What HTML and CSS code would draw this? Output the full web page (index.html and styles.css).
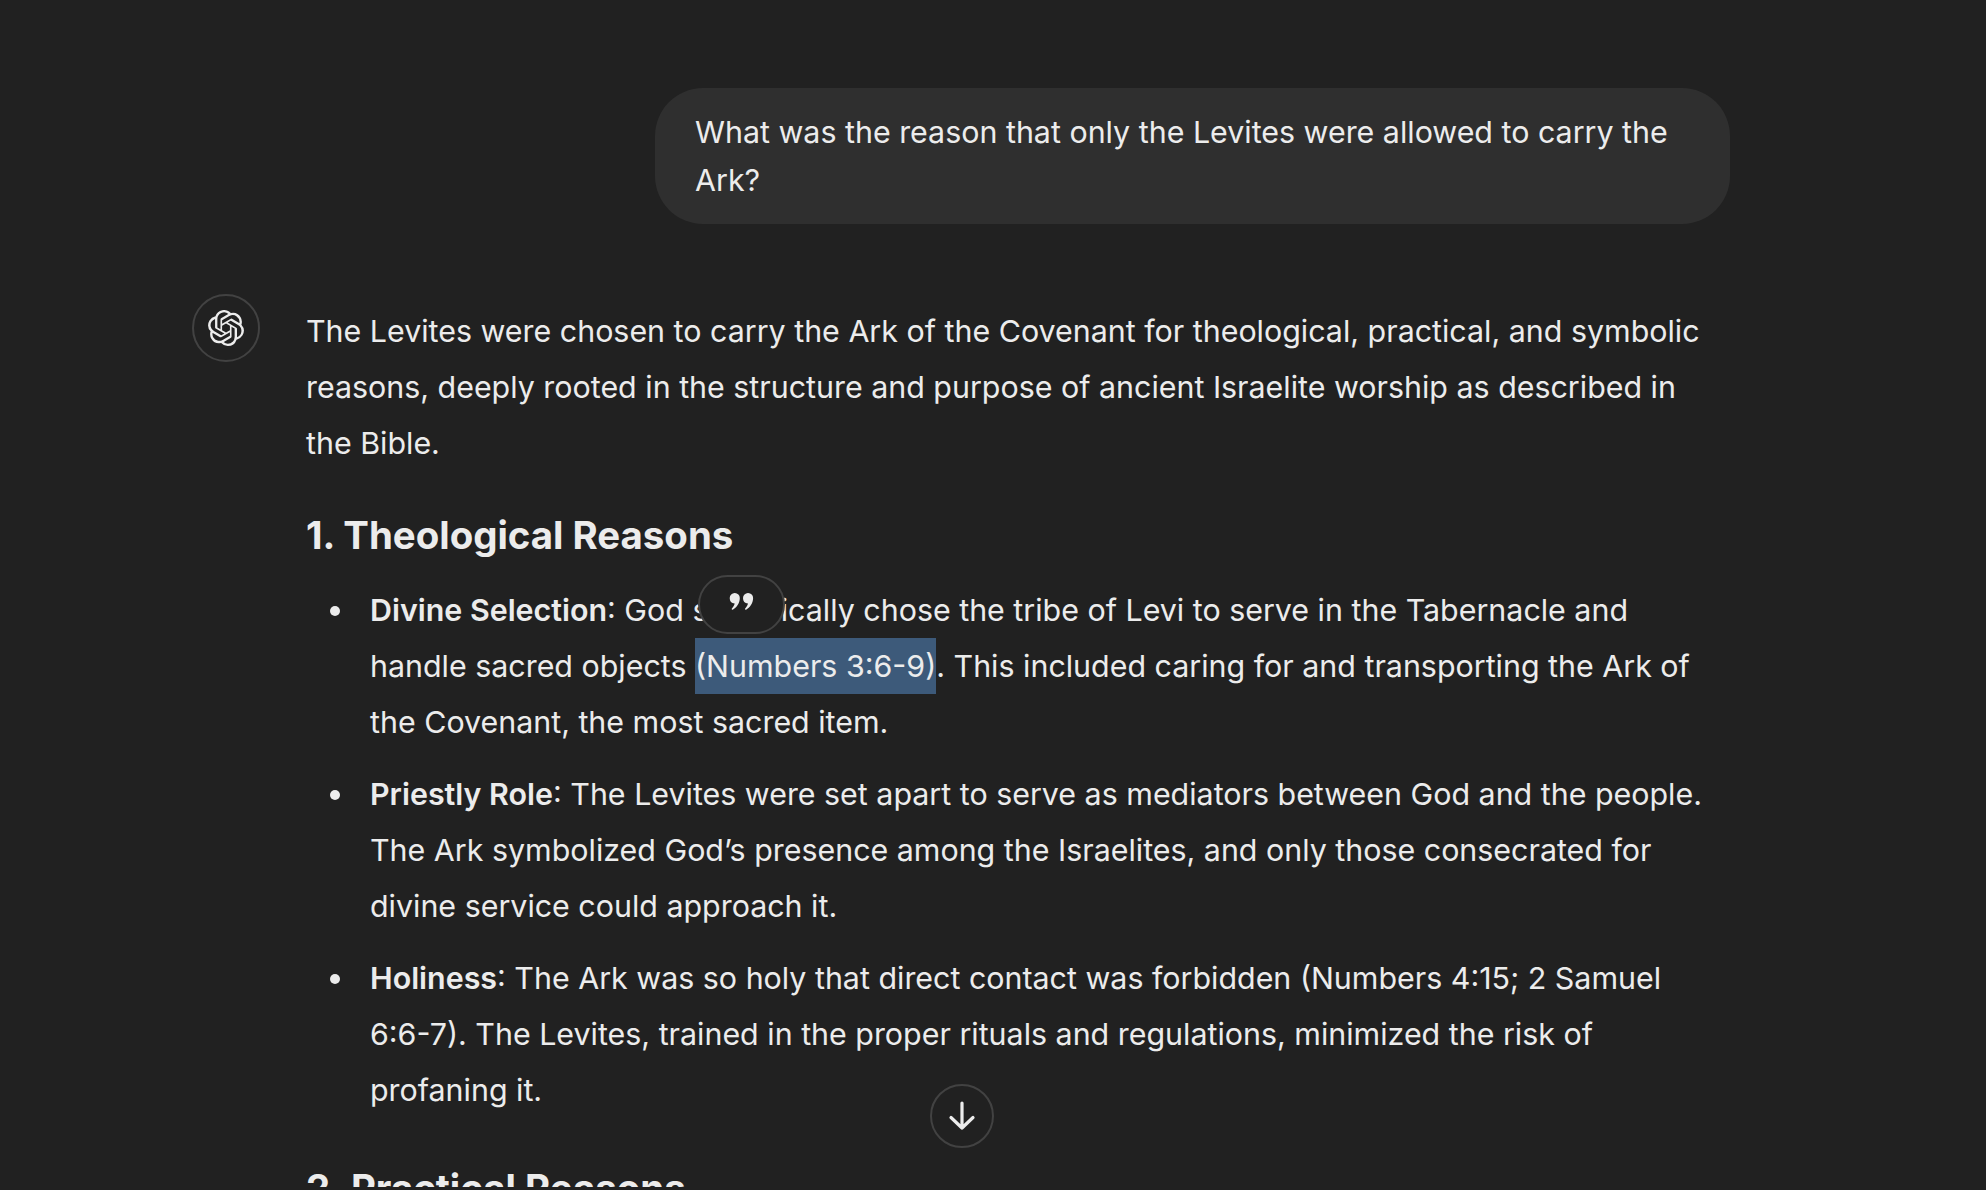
FILE: index.html
```html
<!DOCTYPE html>
<html lang="en">
<head>
<meta charset="utf-8">
<title>Chat</title>
<link rel="stylesheet" href="styles.css">
</head>
<body>
<main class="thread">
  <section class="user-row">
    <div class="bubble">What was the reason that only the Levites were allowed to carry the Ark?</div>
  </section>
  <section class="answer-row">
    <div class="avatar">
      <svg class="logo" viewBox="0 0 24 24" fill="currentColor"><path d="M22.2819 9.8211a5.9847 5.9847 0 0 0-.5157-4.9108 6.0462 6.0462 0 0 0-6.5098-2.9A6.0651 6.0651 0 0 0 4.9807 4.1818a5.9847 5.9847 0 0 0-3.9977 2.9 6.0462 6.0462 0 0 0 .7427 7.0966 5.98 5.98 0 0 0 .511 4.9107 6.051 6.051 0 0 0 6.5146 2.9001A5.9847 5.9847 0 0 0 13.2599 24a6.0557 6.0557 0 0 0 5.7718-4.2058 5.9894 5.9894 0 0 0 3.9977-2.9001 6.0557 6.0557 0 0 0-.7475-7.0729zm-9.022 12.6081a4.4755 4.4755 0 0 1-2.8764-1.0408l.1419-.0804 4.7783-2.7582a.7948.7948 0 0 0 .3927-.6813v-6.7369l2.02 1.1686a.071.071 0 0 1 .038.052v5.5826a4.504 4.504 0 0 1-4.4945 4.4944zm-9.6607-4.1254a4.4708 4.4708 0 0 1-.5346-3.0137l.142.0852 4.783 2.7582a.7712.7712 0 0 0 .7806 0l5.8428-3.3685v2.3324a.0804.0804 0 0 1-.0332.0615L9.74 19.9502a4.4992 4.4992 0 0 1-6.1408-1.6464zM2.3408 7.8956a4.485 4.485 0 0 1 2.3655-1.9728V11.6a.7664.7664 0 0 0 .3879.6765l5.8144 3.3543-2.0201 1.1685a.0757.0757 0 0 1-.071 0l-4.8303-2.7865A4.504 4.504 0 0 1 2.3408 7.872zm16.5963 3.8558L13.1038 8.364 15.1192 7.2a.0757.0757 0 0 1 .071 0l4.8303 2.7913a4.4944 4.4944 0 0 1-.6765 8.1042v-5.6772a.79.79 0 0 0-.407-.667zm2.0107-3.0231l-.142-.0852-4.7735-2.7818a.7759.7759 0 0 0-.7854 0L9.409 9.2297V6.8974a.0662.0662 0 0 1 .0284-.0615l4.8303-2.7866a4.4992 4.4992 0 0 1 6.6802 4.66zM8.3065 12.863l-2.02-1.1638a.0804.0804 0 0 1-.038-.0567V6.0742a4.4992 4.4992 0 0 1 7.3757-3.4537l-.142.0805L8.704 5.459a.7948.7948 0 0 0-.3927.6813zm1.0976-2.3654l2.602-1.4998 2.6069 1.4998v2.9994l-2.5974 1.4997-2.6067-1.4997Z"/></svg>
    </div>
    <article class="answer">
      <p class="intro">The Levites were chosen to carry the Ark of the Covenant for theological, practical, and symbolic reasons, deeply rooted in the structure and purpose of ancient Israelite worship as described in the Bible.</p>
      <h3 class="section-title">1. Theological Reasons</h3>
      <ul class="points">
        <li><strong>Divine Selection</strong>: God specifically chose the tribe of Levi to serve in the Tabernacle and handle sacred objects <span class="selected">(Numbers 3:6-9)</span>. This included caring for and transporting the Ark of the Covenant, the most sacred item.
          <button class="quote-pill" aria-label="Quote">
            <svg class="quote-icon" viewBox="0 0 26 20" fill="currentColor"><path d="M6 0a5.2 5.2 0 0 1 5.2 5.4c0 5-3.4 9.800-7.400 12.100-.8.400-1.500-.5-.9-1.100 1.500-1.600 2.600-3.400 2.900-5.300C2.300 10.600.6 8.500.6 5.400A5.300 5.300 0 0 1 6 0zM20 0a5.200 5.200 0 0 1 5.200 5.400c0 5-3.400 9.800-7.400 12.100-.8.400-1.500-.5-.9-1.100 1.500-1.600 2.600-3.400 2.900-5.300-3.500-.5-5.200-2.600-5.200-5.700A5.300 5.300 0 0 1 20 0z"/></svg>
          </button>
        </li>
        <li><strong>Priestly Role</strong>: The Levites were set apart to serve as mediators between God and the people. The Ark symbolized God’s presence among the Israelites, and only those consecrated for divine service could approach it.</li>
        <li><strong>Holiness</strong>: The Ark was so holy that direct contact was forbidden (Numbers 4:15; 2 Samuel 6:6-7). The Levites, trained in the proper rituals and regulations, minimized the risk of profaning it.</li>
      </ul>
      <h3 class="section-title section-next">2. Practical Reasons</h3>
    </article>
  </section>
</main>
<button class="scroll-down" aria-label="Scroll down">
  <svg class="arrow" viewBox="0 0 32 32" fill="none" stroke="currentColor" stroke-width="3.200" stroke-linecap="round" stroke-linejoin="round"><path d="M16 3v25M5 17.500 16 28l11-10.500"/></svg>
</button>
</body>
</html>
```
FILE: styles.css
```css
* { box-sizing: border-box; }
html, body { margin: 0; height: 100%; }
body {
  background: #212121;
  color: #ececec;
  font-family: Inter, "Noto Sans", sans-serif;
  font-size: 30.4px;
  line-height: 56px;
  overflow: hidden;
  position: relative;
  height: 1190px;
}
.thread {
  display: flex;
  flex-direction: column;
  width: 1538px;
  height: 1187px;
  overflow: hidden;
  margin-left: 192px;
  padding-top: 88px;
}
.user-row { display: flex; justify-content: flex-end; flex: none; }
.bubble {
  width: 1075px;
  padding: 20px 40px;
  background: #2f2f2f;
  border-radius: 48px;
  line-height: 48px;
}
.answer-row {
  display: flex;
  flex: none;
  gap: 46px;
  margin-top: 70px;
}
.avatar {
  flex: none;
  width: 68px;
  height: 68px;
  border: 2px solid #424242;
  border-radius: 50%;
  display: flex;
  align-items: center;
  justify-content: center;
}
.logo { width: 36px; height: 36px; }
.answer { flex: 1; min-width: 0; padding-top: 9px; }
.intro { margin: 0; }
.section-title {
  margin: 36px 0 19px;
  font-size: 38.4px;
  font-weight: 700;
  line-height: 56px;
}
.section-next { margin-top: 42px; }
.points { margin: 0; padding: 0 0 0 64px; position: relative; list-style: none; }
.points li { margin: 16px 0; position: relative; }
.points li:first-child { margin-top: 0; }
.points li::before {
  content: "";
  position: absolute;
  left: -40px;
  top: 24px;
  width: 10px;
  height: 10px;
  border-radius: 50%;
  background: #ececec;
}
.points strong { font-weight: 600; }
.selected { display: inline-block; background: #3d5a7a; }
.quote-pill {
  position: absolute;
  left: 328px;
  top: -7px;
  width: 87px;
  height: 59px;
  padding: 0;
  background: #212121;
  border: 2px solid #424242;
  border-radius: 30px;
  color: #ececec;
  display: flex;
  align-items: center;
  justify-content: center;
}
.quote-icon { width: 25px; height: 19px; margin-top: -4px; }
.scroll-down {
  position: absolute;
  left: 930px;
  top: 1084px;
  width: 64px;
  height: 64px;
  padding: 0;
  background: #212121;
  border: 2px solid #424242;
  border-radius: 50%;
  color: #ececec;
  display: flex;
  align-items: center;
  justify-content: center;
}
.arrow { width: 32px; height: 32px; }
```
